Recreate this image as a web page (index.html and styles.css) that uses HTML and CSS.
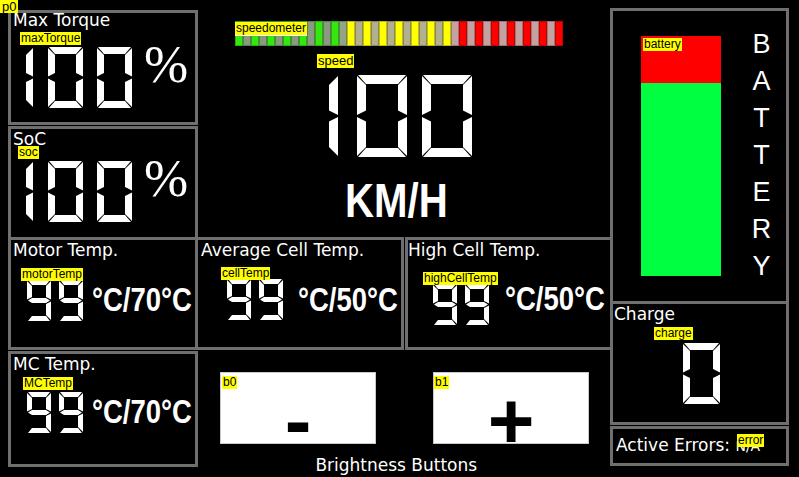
FILE: index.html
```html
<!DOCTYPE html>
<html lang="en">
<head>
<meta charset="utf-8">
<title>Dashboard</title>
<link rel="stylesheet" href="styles.css">
</head>
<body>
<div class="screen">
  <span class="tag tag-p0">p0</span>

  <div class="main">
    <div class="leftstack">
      <section class="panel torque">
        <h2 class="h">Max Torque</h2>
        <span class="tag tag-torque">maxTorque</span>
        <div class="readout">
          <div class="ss ss-md" role="img" aria-label="100"><span class="sr">100</span>
            <span class="dg one"><i class="b"></i><i class="c"></i></span>
            <span class="dg"><i class="a"></i><i class="b"></i><i class="c"></i><i class="d"></i><i class="e"></i><i class="f"></i></span>
            <span class="dg"><i class="a"></i><i class="b"></i><i class="c"></i><i class="d"></i><i class="e"></i><i class="f"></i></span>
          </div>
          <span class="pct">%</span>
        </div>
      </section>

      <section class="panel soc">
        <h2 class="h">SoC</h2>
        <span class="tag tag-soc">soc</span>
        <div class="readout">
          <div class="ss ss-md" role="img" aria-label="100"><span class="sr">100</span>
            <span class="dg one"><i class="b"></i><i class="c"></i></span>
            <span class="dg"><i class="a"></i><i class="b"></i><i class="c"></i><i class="d"></i><i class="e"></i><i class="f"></i></span>
            <span class="dg"><i class="a"></i><i class="b"></i><i class="c"></i><i class="d"></i><i class="e"></i><i class="f"></i></span>
          </div>
          <span class="pct">%</span>
        </div>
      </section>
    </div>

    <div class="center">
      <div class="speedbar">
        <span class="tag tag-speedo">speedometer</span>
        <span class="sg g"></span><span class="sg dgn"></span>
        <span class="sg g"></span><span class="sg dgn"></span>
        <span class="sg g"></span><span class="sg dgn"></span>
        <span class="sg g"></span><span class="sg dgn"></span>
        <span class="sg g"></span><span class="sg dgn"></span>
        <span class="sg g"></span><span class="sg dgn"></span>
        <span class="sg g"></span><span class="sg dgn2"></span>
        <span class="sg y"></span><span class="sg dy"></span>
        <span class="sg y"></span><span class="sg dy"></span>
        <span class="sg y"></span><span class="sg dy"></span>
        <span class="sg y"></span><span class="sg dy"></span>
        <span class="sg y"></span><span class="sg dy"></span>
        <span class="sg y"></span><span class="sg dy"></span>
        <span class="sg y"></span><span class="sg dr"></span>
        <span class="sg r"></span><span class="sg dr"></span>
        <span class="sg r"></span><span class="sg dr"></span>
        <span class="sg r"></span><span class="sg dr"></span>
        <span class="sg r"></span><span class="sg dr"></span>
        <span class="sg r"></span><span class="sg dr"></span>
        <span class="sg r"></span><span class="sg dr"></span>
        <span class="sg r"></span>
      </div>
      <span class="tag tag-speed">speed</span>
      <div class="ss ss-lg speed" role="img" aria-label="100"><span class="sr">100</span>
        <span class="dg one"><i class="b"></i><i class="c"></i></span>
        <span class="dg"><i class="a"></i><i class="b"></i><i class="c"></i><i class="d"></i><i class="e"></i><i class="f"></i></span>
        <span class="dg"><i class="a"></i><i class="b"></i><i class="c"></i><i class="d"></i><i class="e"></i><i class="f"></i></span>
      </div>
      <div class="kmh">KM/H</div>
    </div>

    <section class="panel motor">
      <h2 class="h">Motor Temp.</h2>
      <span class="tag tag-motor">motorTemp</span>
      <div class="readout">
        <div class="ss ss-sm" role="img" aria-label="99"><span class="sr">99</span>
          <span class="dg"><i class="a"></i><i class="b"></i><i class="c"></i><i class="d"></i><i class="f"></i><i class="g"></i></span>
          <span class="dg"><i class="a"></i><i class="b"></i><i class="c"></i><i class="d"></i><i class="f"></i><i class="g"></i></span>
        </div>
        <span class="units">°C/70°C</span>
      </div>
    </section>

    <section class="panel avg">
      <h2 class="h">Average Cell Temp.</h2>
      <span class="tag tag-cell">cellTemp</span>
      <div class="readout">
        <div class="ss ss-sm" role="img" aria-label="99"><span class="sr">99</span>
          <span class="dg"><i class="a"></i><i class="b"></i><i class="c"></i><i class="d"></i><i class="f"></i><i class="g"></i></span>
          <span class="dg"><i class="a"></i><i class="b"></i><i class="c"></i><i class="d"></i><i class="f"></i><i class="g"></i></span>
        </div>
        <span class="units">°C/50°C</span>
      </div>
    </section>

    <section class="panel high">
      <h2 class="h">High Cell Temp.</h2>
      <span class="tag tag-high">highCellTemp</span>
      <div class="readout">
        <div class="ss ss-sm" role="img" aria-label="99"><span class="sr">99</span>
          <span class="dg"><i class="a"></i><i class="b"></i><i class="c"></i><i class="d"></i><i class="f"></i><i class="g"></i></span>
          <span class="dg"><i class="a"></i><i class="b"></i><i class="c"></i><i class="d"></i><i class="f"></i><i class="g"></i></span>
        </div>
        <span class="units">°C/50°C</span>
      </div>
    </section>

    <section class="panel mc">
      <h2 class="h">MC Temp.</h2>
      <span class="tag tag-mc">MCTemp</span>
      <div class="readout">
        <div class="ss ss-sm" role="img" aria-label="99"><span class="sr">99</span>
          <span class="dg"><i class="a"></i><i class="b"></i><i class="c"></i><i class="d"></i><i class="f"></i><i class="g"></i></span>
          <span class="dg"><i class="a"></i><i class="b"></i><i class="c"></i><i class="d"></i><i class="f"></i><i class="g"></i></span>
        </div>
        <span class="units">°C/70°C</span>
      </div>
    </section>

    <div class="bright">
      <div class="btns">
        <div class="btn"><span class="tag tag-b0">b0</span>-</div>
        <div class="btn"><span class="tag tag-b1">b1</span>+</div>
      </div>
      <div class="h bright-title">Brightness Buttons</div>
    </div>
  </div>

  <div class="side">
    <section class="panel battery">
      <div class="batbar">
        <div class="batbar-red"></div>
        <span class="tag tag-bat">battery</span>
      </div>
      <div class="batword">BATTERY</div>
    </section>
    <section class="panel charge">
      <h2 class="h">Charge</h2>
      <span class="tag tag-charge">charge</span>
      <div class="ss ss-ch" role="img" aria-label="0"><span class="sr">0</span>
        <span class="dg"><i class="a"></i><i class="b"></i><i class="c"></i><i class="d"></i><i class="e"></i><i class="f"></i></span>
      </div>
    </section>
    <section class="panel errors">
      <p class="h">Active Errors: <span class="na">N/A</span></p>
      <span class="tag tag-error">error</span>
    </section>
  </div>
</div>
</body>
</html>
```

FILE: styles.css
```css
* { box-sizing: border-box; margin: 0; padding: 0; }

body {
  background: #000;
  color: #fff;
  font-family: "DejaVu Sans", sans-serif;
  width: 799px;
  height: 477px;
  overflow: hidden;
}

.screen {
  position: relative;
  display: flex;
  width: 799px;
  height: 477px;
}

.main {
  margin-left: 8px;
  width: 602px;
  height: 467px;
  display: grid;
  grid-template-columns: 190px 206px 206px;
  grid-template-rows: 237px 113px 117px;
}

.panel {
  position: relative;
  border: 3px solid #6f6f6f;
}

.h {
  font-size: 17px;
  line-height: 14px;
  font-weight: 400;
  padding-left: 2px;
  white-space: nowrap;
}

/* ---------- labels (editor object names) ---------- */
.tag {
  position: absolute;
  z-index: 3;
  background: #ffff00;
  color: #000;
  font: 12px/13px "Liberation Sans", Arial, sans-serif;
  padding: 0 1px;
  white-space: nowrap;
}
.tag-p0 { left: 0; top: 0; font-size: 13px; padding: 0 2px; }
.tag-torque { left: 9px; top: 19px; }
.tag-soc { left: 7px; top: 17px; }
.tag-speedo { left: 0; top: 1px; border-bottom: 1px solid #fff; }
.tag-speed { left: 119px; top: 54px; font-size: 13px; line-height: 14px; }
.tag-bat { left: 2px; top: 2px; }
.tag-motor { left: 10px; top: 28px; }
.tag-cell { left: 23px; top: 27px; }
.tag-high { left: 15px; top: 32px; }
.tag-mc { left: 12px; top: 23px; }
.tag-b0 { left: 1px; top: 3px; font-weight: 400; }
.tag-b1 { left: 0; top: 3px; font-weight: 400; }
.tag-charge { left: 41px; top: 23px; }
.tag-error { left: 124px; top: 5px; }

/* ---------- seven segment display ---------- */
.ss { position: relative; display: flex; gap: var(--gap, 0px); }
/* the value as selectable text layer over the lit segments */
.sr {
  position: absolute;
  left: 0;
  top: 0;
  width: 100%;
  height: 100%;
  color: transparent;
  font-size: calc(var(--h) * 0.8);
  line-height: var(--h);
  text-align: right;
  white-space: nowrap;
}
.dg {
  position: relative;
  flex: none;
  width: var(--w);
  height: var(--h);
}
.dg.one { width: var(--t); margin-right: var(--g1, 0px); }
.dg i { position: absolute; background: #fff; }
.dg .a {
  left: 0; top: 0; width: 100%; height: var(--t);
  clip-path: polygon(1px 0, calc(100% - 1px) 0, calc(100% - var(--t)) 100%, var(--t) 100%);
}
.dg .d {
  left: 0; bottom: 0; width: 100%; height: var(--t);
  clip-path: polygon(var(--t) 0, calc(100% - var(--t)) 0, calc(100% - 1px) 100%, 1px 100%);
}
.dg .f {
  left: 0; top: 0; width: var(--t); height: 50%;
  clip-path: polygon(0 1px, 100% calc(var(--t) + 1px), 100% calc(100% - var(--t) / 2 - 1px), 0 calc(100% - 1px));
}
.dg .e {
  left: 0; top: 50%; width: var(--t); height: 50%;
  clip-path: polygon(0 1px, 100% calc(var(--t) / 2 + 1px), 100% calc(100% - var(--t) - 1px), 0 calc(100% - 1px));
}
.dg .b {
  right: 0; top: 0; width: var(--t); height: 50%;
  clip-path: polygon(100% 1px, 100% calc(100% - 1px), 0 calc(100% - var(--t) / 2 - 1px), 0 calc(var(--t) + 1px));
}
.dg .c {
  right: 0; top: 50%; width: var(--t); height: 50%;
  clip-path: polygon(100% 1px, 100% calc(100% - 1px), 0 calc(100% - var(--t) - 1px), 0 calc(var(--t) / 2 + 1px));
}
.dg .g {
  left: 0; top: calc(50% - var(--t) / 2); width: 100%; height: var(--t);
  clip-path: polygon(1px 50%, var(--t) 0, calc(100% - var(--t)) 0, calc(100% - 1px) 50%, calc(100% - var(--t)) 100%, var(--t) 100%);
}

.ss-md { --w: 35px; --h: 61px; --t: 7px; --gap: 14px; --g1: 1px; }
.ss-lg { --w: 50px; --h: 82px; --t: 9px; --gap: 15px; --g1: 4px; }
.ss-sm { --w: 24px; --h: 41px; --t: 5px; --gap: 8px; }
.ss-ch { --w: 37px; --h: 61px; --t: 7px; }

/* ---------- readouts ---------- */
.readout { display: flex; align-items: flex-start; }

.pct {
  font-family: "Liberation Serif", serif;
  font-size: 53px;
  line-height: 53px;
  margin: -8.6px 0 0 12px;
}

.units {
  display: inline-block;
  width: 100px;
  font-family: "Liberation Sans", Arial, sans-serif;
  font-weight: 700;
  font-size: 33.5px;
  line-height: 34px;
  white-space: nowrap;
  transform: scaleX(0.82);
  transform-origin: 0 0;
}

/* ---------- left stack ---------- */
.leftstack {
  grid-column: 1;
  grid-row: 1;
  padding-top: 10px;
  display: flex;
  flex-direction: column;
  gap: 1px;
}
.torque { height: 115px; }
.torque .readout { margin: 20px 0 0 15px; }
.soc { height: 111px; border-bottom: none; padding-top: 2.5px; }
.soc .readout { margin: 15.5px 0 0 15px; }

/* ---------- centre ---------- */
.center {
  grid-column: 2 / 4;
  grid-row: 1;
  position: relative;
  display: flex;
  flex-direction: column;
  align-items: flex-start;
}
.speedbar {
  position: relative;
  display: flex;
  margin: 21px 0 0 37px;
  height: 25px;
}
.sg {
  width: 8px;
  height: 25px;
  box-shadow: inset 0 0 0 1px rgba(0, 0, 0, 0.25);
}
.sg.g { background: #33e80c; }
.sg.dgn { background: #8a9a80; }
.sg.dgn2 { background: #93a487; }
.sg.y { background: #ffff00; }
.sg.dy { background: #b2b08f; }
.sg.r { background: #ff0000; }
.sg.dr { background: #c6a1a1; }

.speed { margin: 29px 0 0 131px; }
.kmh {
  width: 102px;
  font-family: "Liberation Sans", Arial, sans-serif;
  font-weight: 700;
  font-size: 49px;
  line-height: 49px;
  white-space: nowrap;
  margin: 18.5px 0 0 147px;
  transform: scaleX(0.82);
  transform-origin: 0 0;
}

/* ---------- temperature row ---------- */
.motor { grid-column: 1; grid-row: 2; padding-top: 2.5px; }
.motor .readout { margin: 23.5px 0 0 16px; }
.motor .units { margin: 3.4px 0 0 8.5px; }

.avg { grid-column: 2; grid-row: 2; border-left: none; padding-top: 2.5px; }
.avg .h { padding-left: 3px; }
.avg .readout { margin: 22.5px 0 0 29px; }
.avg .units { margin: 4.4px 0 0 14.5px; }

.high { grid-column: 3; grid-row: 2; margin-left: 1px; border-right: none; padding-top: 2.5px; }
.high .h { padding-left: 0; }
.high .readout { margin: 27.5px 0 0 25px; }
.high .units { margin: -1.6px 0 0 15.5px; }

.mc { grid-column: 1; grid-row: 3; margin-top: 1px; padding-top: 2.5px; }
.mc .readout { margin: 21.5px 0 0 16px; }
.mc .units { margin: 3.4px 0 0 8.5px; }

/* ---------- brightness ---------- */
.bright {
  grid-column: 2 / 4;
  grid-row: 3;
  display: flex;
  flex-direction: column;
  align-items: flex-start;
}
.btns { display: flex; gap: 57px; margin: 22px 0 0 22px; }
.btn {
  position: relative;
  width: 156px;
  height: 72px;
  background: #fff;
  border: 1px solid #c8c8c8;
  color: #000;
  font-family: "Liberation Sans", Arial, sans-serif;
  font-weight: 700;
  font-size: 80px;
  line-height: 80px;
  text-align: center;
  padding-top: 8.3px;
}
.bright-title { margin: 13.5px 0 0 115.4px; }

/* ---------- right column ---------- */
.side {
  width: 179px;
  display: flex;
  flex-direction: column;
}
.battery {
  margin-top: 8px;
  height: 296px;
  display: flex;
  align-items: flex-start;
}
.batbar {
  position: relative;
  margin: 25px 0 0 28px;
  width: 80px;
  height: 240px;
  background: #00ff40;
}
.batbar-red { height: 47px; background: #ff0000; }
.batword {
  margin: 14.5px 0 0 28.5px;
  width: 24px;
  font-family: "Liberation Sans", Arial, sans-serif;
  font-size: 27px;
  line-height: 37px;
  text-align: center;
  word-break: break-all;
}

.charge { height: 121px; border-top: none; padding-top: 2.5px; }
.charge .h { padding-left: 1px; }
.charge .ss { margin: 22.5px 0 0 70px; }

.errors { margin-top: 1px; height: 40px; padding-top: 8.5px; }
.errors .h { padding-left: 3px; }
.na { font-size: 14px; }
```
